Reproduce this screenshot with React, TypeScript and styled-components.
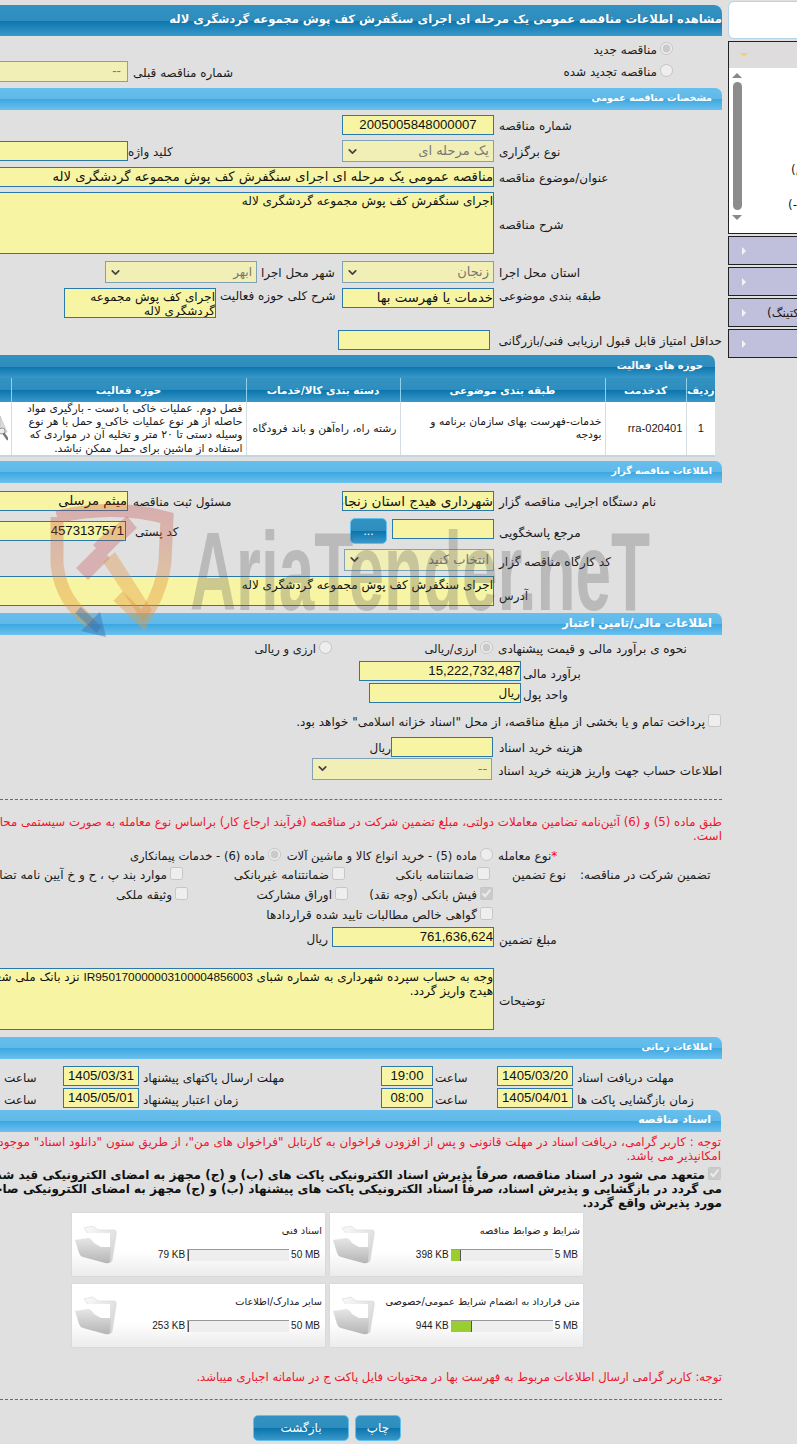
import * as React from "react";
import styled, { createGlobalStyle } from "styled-components";
import { ChevronDown } from "lucide-react";

const GlobalStyle = createGlobalStyle`
  html, body {
    margin: 0;
    padding: 0;
    background: #e0e0e0;
  }
  body {
    font-family: "DejaVu Sans", "Liberation Sans", sans-serif;
    font-size: 12px;
    color: #1a1a1a;
  }
`;

const Page = styled.div`
  display: flex;
  direction: rtl;
  position: relative;
  width: 797px;
  height: 1444px;
  overflow: hidden;
  background: #e0e0e0;
`;

/* ---------- right hand menu ---------- */

const SideBar = styled.aside`
  flex: 0 0 200px;
  margin-right: -131px;
  margin-left: 6px;
  padding-top: 1px;
  direction: ltr;
`;

const SideTop = styled.div`
  height: 38px;
  box-sizing: border-box;
  background: #fff;
  border: 1px solid #b4d4ea;
  border-radius: 6px 0 0 6px;
  margin-bottom: 2px;
`;

const Accordion = styled.div`
  height: 193px;
  box-sizing: border-box;
  border: 1px solid #222;
  background: #fff;
`;

const AccordionHead = styled.div`
  height: 26px;
  background: #dedcdc;
  display: flex;
  align-items: center;
  padding-left: 11px;
`;

const Caret = styled.span`
  width: 0;
  height: 0;
  border-left: 4px solid transparent;
  border-right: 4px solid transparent;
  border-top: 4px solid #eed36c;
`;

const AccordionBody = styled.div`
  display: flex;
  height: 165px;
`;

const ScrollTrack = styled.div`
  flex: 0 0 10px;
  margin: 5px 0 0 3px;
  display: flex;
  flex-direction: column;
  align-items: center;
`;

const ScrollArrow = styled.span<{ $down?: boolean }>`
  width: 0;
  height: 0;
  border-left: 5px solid transparent;
  border-right: 5px solid transparent;
  ${(p) => (p.$down ? "border-top: 5px solid #888;" : "border-bottom: 5px solid #888;")}
`;

const ScrollThumb = styled.span`
  width: 9px;
  height: 128px;
  margin: 4px 0 5px;
  border-radius: 5px;
  background: #8c8c8c;
`;

const MenuList = styled.div`
  flex: 1;
`;

const MenuText = styled.div<{ $indent: number; $top: number }>`
  padding-left: ${(p) => p.$indent}px;
  padding-top: ${(p) => p.$top}px;
  direction: rtl;
  text-align: left;
  white-space: nowrap;
  font-size: 12px;
  line-height: 16px;
`;

const MenuItem = styled.div`
  height: 29px;
  box-sizing: border-box;
  margin-top: 2px;
  border: 1px solid #222;
  background: #c0c0dc;
  display: flex;
  align-items: center;
  padding-left: 13px;
  gap: 21px;
  white-space: nowrap;
`;

const MenuArrow = styled.span`
  width: 0;
  height: 0;
  flex: none;
  border-top: 4px solid transparent;
  border-bottom: 4px solid transparent;
  border-left: 4px solid #f4f4f4;
`;

const MenuItemText = styled.span`
  direction: rtl;
`;

/* ---------- main column ---------- */

const Main = styled.main`
  flex: 0 0 722px;
  width: 722px;
  padding-top: 5px;
`;

const darkBar = "linear-gradient(#3192c1 0, #2f8dbd 50%, #0b76ae 52%, #3a98c9 100%)";

const TitleBar = styled.h1`
  margin: 0;
  height: 31px;
  box-sizing: border-box;
  line-height: 29px;
  font-size: 11.6px;
  font-weight: bold;
  color: #fff;
  white-space: nowrap;
  text-shadow: 0 0 1px #0b5c8a;
  border-top-right-radius: 8px;
  background: ${darkBar};
`;

const SectionBar = styled.h2<{ $right?: number; $after?: number; $size?: number }>`
  margin: 0 ${(p) => p.$right ?? 0}px ${(p) => p.$after ?? 0}px 0;
  height: 22px;
  box-sizing: border-box;
  padding-right: 10px;
  line-height: 20px;
  font-size: ${(p) => p.$size ?? 10}px;
  font-weight: bold;
  color: #fff;
  border-top-right-radius: 7px;
  background: linear-gradient(#66bfec 0, #5fb8e8 50%, #3da8e2 52%, #6cc0ec 100%);
`;

const TableBar = styled.h2`
  margin: 0 7px 0 0;
  height: 23px;
  box-sizing: border-box;
  padding-right: 12px;
  line-height: 22px;
  font-size: 10px;
  font-weight: bold;
  color: #fff;
  border-top-right-radius: 7px;
  background: ${darkBar};
`;

const Row = styled.div<{ $h: number; $mt?: number }>`
  display: flex;
  height: ${(p) => p.$h}px;
  margin-top: ${(p) => p.$mt ?? 0}px;
  align-items: flex-start;
  white-space: nowrap;
`;

const Label = styled.label<{ $w: number; $pl?: number; $pt?: number }>`
  flex: 0 0 ${(p) => p.$w}px;
  box-sizing: border-box;
  padding-left: ${(p) => p.$pl ?? 5}px;
  margin-top: ${(p) => p.$pt ?? 0}px;
  line-height: 23px;
  text-align: left;
`;

const Required = styled.span`
  color: #f00;
`;

const Field = styled.div<{
  $w: number;
  $h?: number;
  $latin?: boolean;
  $center?: boolean;
  $mt?: number;
  $mr?: number;
  $dim?: boolean;
  $pad?: number;
  $size?: number;
  $nowrap?: boolean;
}>`
  flex: 0 0 ${(p) => p.$w}px;
  width: ${(p) => p.$w}px;
  height: ${(p) => p.$h ?? 20}px;
  box-sizing: border-box;
  margin-top: ${(p) => p.$mt ?? 0}px;
  margin-right: ${(p) => p.$mr ?? 0}px;
  padding: 0 ${(p) => p.$pad ?? 0}px;
  overflow: hidden;
  background: ${(p) => (p.$dim ? "#f2efb6" : "#f7f5a4")};
  border: 1px solid ${(p) => (p.$dim ? "#7fa3b5" : "#2b78ab")};
  line-height: 18px;
  text-align: ${(p) => (p.$center ? "center" : "right")};
  white-space: nowrap;
  font-family: ${(p) => (p.$latin ? '"Liberation Sans", sans-serif' : "inherit")};
  font-size: ${(p) => p.$size ?? 13.2}px;
  color: ${(p) => (p.$dim ? "#777" : "#111")};
`;

const TextArea = styled(Field)`
  white-space: ${(p) => (p.$nowrap ? "nowrap" : "normal")};
  line-height: 14px;
  padding-top: 1px;
  font-size: 12px;
`;

const SelectBox = styled(Field)`
  display: flex;
  justify-content: space-between;
  align-items: center;
  height: 22px;
  padding: 0 4px 0 3px;
  background: #f2efb6;
  border-color: #7fa3b5;
  color: #777;
  svg {
    color: #444;
    flex: none;
  }
`;

const Iban = styled.span`
  font-family: "Liberation Sans", sans-serif;
  font-size: 11.8px;
`;

const DotsButton = styled.button`
  flex: 0 0 37px;
  height: 26px;
  margin: -1px 5px 0 0;
  padding: 0;
  color: #fff;
  font: 12px "Liberation Sans", sans-serif;
  border: 1px solid #63bfee;
  border-radius: 5px;
  background: ${darkBar};
`;

const Unit = styled.span<{ $mr?: number; $mt?: number }>`
  margin-right: ${(p) => p.$mr ?? 0}px;
  margin-top: ${(p) => p.$mt ?? 0}px;
  line-height: 23px;
`;

const Choice = styled.span<{ $w?: number; $mr?: number; $mt?: number; $pr?: number; $size?: number }>`
  display: inline-flex;
  flex: 0 0 ${(p) => (p.$w ? `${p.$w}px` : "auto")};
  min-width: 0;
  box-sizing: border-box;
  margin-right: ${(p) => p.$mr ?? 0}px;
  margin-top: ${(p) => p.$mt ?? 0}px;
  padding-right: ${(p) => p.$pr ?? 0}px;
  align-items: flex-start;
  line-height: 23px;
  font-size: ${(p) => p.$size ?? 12}px;
  input {
    margin: 3px 0 0 3px;
    flex: none;
  }
`;

const Divider = styled.hr<{ $top: number }>`
  margin: ${(p) => p.$top}px 0 0;
  border: 0;
  border-top: 1px dashed #2a7db0;
  height: 0;
`;

const RedNote = styled.div<{ $top?: number; $right?: number; $size?: number }>`
  margin-top: ${(p) => p.$top ?? 0}px;
  padding-right: ${(p) => p.$right ?? 0}px;
  color: #f0142c;
  font-size: ${(p) => p.$size ?? 12}px;
  line-height: 14px;
  white-space: nowrap;
`;

const Pledge = styled.div`
  margin-top: 4px;
  font-weight: bold;
  color: #111;
  line-height: 14px;
  white-space: nowrap;
  input {
    margin: 0 1px 0 3px;
    vertical-align: -1px;
  }
`;

/* ---------- activity table ---------- */

const TableWrap = styled.div`
  margin: 0 7px 4px 0;
`;

const ActivityTable = styled.table`
  width: 730px;
  table-layout: fixed;
  border-collapse: collapse;
  background: #fff;
  border-bottom: 2px solid #c6d5dc;
`;

const HeadCell = styled.th<{ $w: number }>`
  width: ${(p) => p.$w}px;
  box-sizing: border-box;
  height: 24px;
  padding: 0;
  font-size: 10.4px;
  color: #fff;
  border-left: 1px solid #8fd0ee;
  background: ${darkBar};
`;

const BodyCell = styled.td<{ $center?: boolean; $latin?: boolean }>`
  height: 53px;
  box-sizing: border-box;
  padding: 0 3px;
  font-size: 10.8px;
  line-height: 13.2px;
  vertical-align: middle;
  overflow: hidden;
  border-left: 1px solid #d4dde2;
  text-align: ${(p) => (p.$center ? "center" : "right")};
  font-family: ${(p) => (p.$latin ? '"Liberation Sans", sans-serif' : "inherit")};
  ${(p) => p.$latin && "font-size: 11.2px;"}
`;

const MagnifierArt = styled.svg`
  display: block;
  width: 11px;
  height: 28px;
`;

/* ---------- documents ---------- */

const DocGrid = styled.div`
  display: grid;
  grid-template-columns: 253px 253px;
  gap: 8px 5px;
  margin: 3px 139px 0 0;
`;

const DocCard = styled.div`
  height: 63px;
  display: flex;
  box-sizing: border-box;
  padding: 0 3px 0 3px;
  background: linear-gradient(#fff 0, #fff 60%, #ececec 100%);
  box-shadow: 0 0 2px #ccc;
`;

const DocBody = styled.div`
  flex: 1;
`;

const DocTitle = styled.div`
  margin-top: 11px;
  font-size: 9.8px;
  line-height: 14px;
  white-space: nowrap;
`;

const Meter = styled.div`
  direction: ltr;
  display: flex;
  justify-content: flex-end;
  align-items: center;
  gap: 2px;
  margin-top: 11px;
  padding-right: 2px;
  font-family: "Liberation Sans", sans-serif;
  font-size: 10px;
`;

const MeterTrack = styled.div`
  flex: 0 0 102px;
  height: 12px;
  box-sizing: border-box;
  background: #eee;
  border-top: 1px solid #999;
`;

const MeterFill = styled.div`
  height: 100%;
  background: #9acd32;
  border-right: 1px solid #555;
`;

const FolderArt = styled.svg`
  flex: none;
  width: 42px;
  height: 40px;
  margin-top: 12px;
`;

const ButtonRow = styled.div`
  display: flex;
  gap: 6px;
  margin: 15px 321px 0 0;
`;

const ActionButton = styled.button<{ $w: number }>`
  width: ${(p) => p.$w}px;
  height: 26px;
  padding: 0;
  font: 12px "DejaVu Sans", sans-serif;
  color: #fff;
  border: 1px solid #63bfee;
  border-radius: 5px;
  background: ${darkBar};
`;

const Watermark = styled.svg`
  position: absolute;
  left: 0;
  top: 500px;
  pointer-events: none;
`;

const Folder = () => (
  <FolderArt viewBox="0 0 42 40">
    <defs>
      <linearGradient id="folderBack" x1="0" y1="0" x2="1" y2="1">
        <stop offset="0" stopColor="#fbfbfb" />
        <stop offset="1" stopColor="#cfcfcf" />
      </linearGradient>
      <linearGradient id="folderFront" x1="0" y1="0" x2="0" y2="1">
        <stop offset="0" stopColor="#e6e6e6" />
        <stop offset="1" stopColor="#b5b5b5" />
      </linearGradient>
    </defs>
    <path d="M9 3 L18 1 L23 5 L40 5 Q42 6 41 10 L37 36 Q36 38 34 37 Z" fill="url(#folderBack)" stroke="#d6d6d6" strokeWidth="0.6" />
    <path d="M11 8 L35 8 L35 26 L20 26 Z" fill="#fff" />
    <path d="M0 15 L13 13 Q16 13 19 18 L26 22 L36 22 L35 37 Q34 39 30 38 L8 32 Q5 31 4 28 Z" fill="url(#folderFront)" />
  </FolderArt>
);

const Magnifier = () => (
  <MagnifierArt viewBox="0 0 11 28">
    <path d="M3 2 L10 18 L4 20 Z" fill="#dcdcdc" stroke="#b5b5b5" strokeWidth="0.6" />
    <circle cx="5" cy="17" r="3" fill="#eee" stroke="#999" />
    <path d="M7 20 L10.5 25" stroke="#777" strokeWidth="2.4" strokeLinecap="round" />
  </MagnifierArt>
);

type DocProps = { title: string; max: string; size: string; fill: number };

const Doc = ({ title, max, size, fill }: DocProps) => (
  <DocCard>
    <DocBody>
      <DocTitle>{title}</DocTitle>
      <Meter>
        <span>{size}</span>
        <MeterTrack>
          <MeterFill style={{ width: fill }} />
        </MeterTrack>
        <span>{max}</span>
      </Meter>
    </DocBody>
    <Folder />
  </DocCard>
);

const Chevron = () => <ChevronDown size={13} strokeWidth={3.2} />;

const docs: DocProps[] = [
  { title: "شرایط و ضوابط مناقصه", max: "5 MB", size: "398 KB", fill: 9 },
  { title: "اسناد فنی", max: "50 MB", size: "79 KB", fill: 1 },
  { title: "متن قرارداد به انضمام شرایط عمومی/خصوصی", max: "5 MB", size: "944 KB", fill: 20 },
  { title: "سایر مدارک/اطلاعات", max: "50 MB", size: "253 KB", fill: 1 },
];

export default function App() {
  return (
    <>
      <GlobalStyle />
      <Page>
        <SideBar>
          <SideTop />
          <Accordion>
            <AccordionHead>
              <Caret />
            </AccordionHead>
            <AccordionBody>
              <ScrollTrack>
                <ScrollArrow />
                <ScrollThumb />
                <ScrollArrow $down />
              </ScrollTrack>
              <MenuList>
                <MenuText $indent={49} $top={94}>
                  (مناقصات من)
                </MenuText>
                <MenuText $indent={46} $top={19}>
                  (گزارش-)
                </MenuText>
              </MenuList>
            </AccordionBody>
          </Accordion>
          <MenuItem>
            <MenuArrow />
          </MenuItem>
          <MenuItem>
            <MenuArrow />
          </MenuItem>
          <MenuItem>
            <MenuArrow />
            <MenuItemText>(تله مارکتینگ)</MenuItemText>
          </MenuItem>
          <MenuItem>
            <MenuArrow />
          </MenuItem>
        </SideBar>

        <Main>
          <TitleBar>مشاهده اطلاعات مناقصه عمومی یک مرحله ای اجرای سنگفرش کف پوش مجموعه گردشگری لاله</TitleBar>

          <Row $h={25}>
            <Choice $mr={49} $mt={3}>
              <input type="radio" disabled defaultChecked name="kind" />
              مناقصه جدید
            </Choice>
          </Row>
          <Row $h={27}>
            <Choice $w={488} $pr={49}>
              <input type="radio" disabled name="kind" />
              مناقصه تجدید شده
            </Choice>
            <Label $w={106} $pt={1}>
              شماره مناقصه قبلی
            </Label>
            <Field $w={150} $h={21} $dim $pad={6} $latin>
              --
            </Field>
          </Row>

          <SectionBar $after={5} $size={9.5}>
            مشخصات مناقصه عمومی
          </SectionBar>

          <Row $h={25}>
            <Label $w={228}>شماره مناقصه</Label>
            <Field $w={152} $latin $center>
              2005005848000007
            </Field>
          </Row>
          <Row $h={27}>
            <Label $w={228} $pt={1}>
              نوع برگزاری
            </Label>
            <SelectBox $w={152} $dim $size={13}>
              یک مرحله ای
              <Chevron />
            </SelectBox>
            <Label $w={214} $pl={0} $pt={1}>
              کلید واژه
            </Label>
            <Field $w={140} $mt={1} />
          </Row>
          <Row $h={25}>
            <Label $w={228}>عنوان/موضوع مناقصه</Label>
            <Field $w={520}>مناقصه عمومی یک مرحله ای اجرای سنگفرش کف پوش مجموعه گردشگری لاله</Field>
          </Row>
          <Row $h={69}>
            <Label $w={228} $pt={22}>
              شرح مناقصه
            </Label>
            <TextArea $w={520} $h={62}>
              اجرای سنگفرش کف پوش مجموعه گردشگری لاله
            </TextArea>
          </Row>
          <Row $h={27}>
            <Label $w={228} $pt={1}>
              استان محل اجرا
            </Label>
            <SelectBox $w={152} $dim $size={13}>
              زنجان
              <Chevron />
            </SelectBox>
            <Label $w={85} $pl={4} $pt={1}>
              شهر محل اجرا
            </Label>
            <SelectBox $w={152} $dim $size={12}>
              ابهر
              <Chevron />
            </SelectBox>
          </Row>
          <Row $h={42}>
            <Label $w={228} $pt={-3}>
              طبقه بندی موضوعی
            </Label>
            <Field $w={152}>خدمات یا فهرست بها</Field>
            <Label $w={126} $pl={4} $pt={-3}>
              شرح کلی حوزه فعالیت
            </Label>
            <TextArea $w={152} $h={30}>
              اجرای کف پوش مجموعه گردشگری لاله
            </TextArea>
          </Row>
          <Row $h={25}>
            <Label $w={232} $pl={9}>
              حداقل امتیاز قابل قبول ارزیابی فنی/بازرگانی
            </Label>
            <Field $w={152} />
          </Row>

          <TableBar>حوزه های فعالیت</TableBar>
          <TableWrap>
            <ActivityTable>
              <thead>
                <tr>
                  <HeadCell $w={29}>ردیف</HeadCell>
                  <HeadCell $w={81}>کدخدمت</HeadCell>
                  <HeadCell $w={205}>طبقه بندی موضوعی</HeadCell>
                  <HeadCell $w={154}>دسته بندی کالا/خدمات</HeadCell>
                  <HeadCell $w={235}>حوزه فعالیت</HeadCell>
                  <HeadCell $w={26} />
                </tr>
              </thead>
              <tbody>
                <tr>
                  <BodyCell $center $latin>
                    1
                  </BodyCell>
                  <BodyCell $latin>rra-020401</BodyCell>
                  <BodyCell>خدمات-فهرست بهای سازمان برنامه و بودجه</BodyCell>
                  <BodyCell>رشته راه، راه‌آهن و باند فرودگاه</BodyCell>
                  <BodyCell>
                    فصل دوم. عملیات خاکی با دست - بارگیری مواد حاصله از هر نوع عملیات خاکی و حمل با هر نوع وسیله دستی تا ۲۰ متر و تخلیه آن در مواردی که استفاده از ماشین برای حمل ممکن نباشد.
                  </BodyCell>
                  <BodyCell>
                    <Magnifier />
                  </BodyCell>
                </tr>
              </tbody>
            </ActivityTable>
          </TableWrap>

          <SectionBar $after={8} $size={9.5}>
            اطلاعات مناقصه گزار
          </SectionBar>
          <Row $h={28}>
            <Label $w={228}>نام دستگاه اجرایی مناقصه گزار</Label>
            <Field $w={152} $size={13.6}>
              شهرداری هیدج استان زنجان
            </Field>
            <Label $w={214} $pl={5}>
              مسئول ثبت مناقصه
            </Label>
            <Field $w={140}>میثم مرسلی</Field>
          </Row>
          <Row $h={30}>
            <Label $w={228} $pt={3}>
              مرجع پاسخگویی
            </Label>
            <Field $w={102} />
            <DotsButton>...</DotsButton>
            <Label $w={224} $pl={9} $pt={2}>
              کد پستی
            </Label>
            <Field $w={140} $mt={2} $latin $pad={1}>
              4573137571
            </Field>
          </Row>
          <Row $h={27}>
            <Label $w={228} $pt={2}>
              کد کارگاه مناقصه گزار
            </Label>
            <SelectBox $w={150} $dim $size={13}>
              انتخاب کنید
              <Chevron />
            </SelectBox>
          </Row>
          <Row $h={37}>
            <Label $w={228} $pt={9}>
              آدرس
            </Label>
            <TextArea $w={520} $h={30}>
              اجرای سنگفرش کف پوش مجموعه گردشگری لاله
            </TextArea>
          </Row>

          <SectionBar $after={2} $size={11.5}>
            اطلاعات مالی/تامین اعتبار
          </SectionBar>
          <Row $h={24}>
            <Label $w={229} $pt={1}>
              نحوه ی برآورد مالی و قیمت پیشنهادی
            </Label>
            <Choice $w={161} $mt={1} $size={11.5}>
              <input type="radio" disabled defaultChecked name="estimate" />
              ارزی/ریالی
            </Choice>
            <Choice $mt={1} $size={11.5}>
              <input type="radio" disabled name="estimate" />
              ارزی و ریالی
            </Choice>
          </Row>
          <Row $h={22}>
            <Label $w={201} $pl={2} $pt={2}>
              برآورد مالی
            </Label>
            <Field $w={162} $latin>
              15,222,732,487
            </Field>
          </Row>
          <Row $h={27}>
            <Label $w={201} $pl={2} $pt={1}>
              واحد پول
            </Label>
            <Field $w={152} $size={12}>
              ریال
            </Field>
          </Row>
          <Row $h={27}>
            <Choice $mr={1} $mt={1}>
              <input type="checkbox" disabled />
              پرداخت تمام و یا بخشی از مبلغ مناقصه، از محل "اسناد خزانه اسلامی" خواهد بود.
            </Choice>
          </Row>
          <Row $h={21}>
            <Label $w={229} $pl={6}>
              هزینه خرید اسناد
            </Label>
            <Field $w={102} />
            <Unit>ریال</Unit>
          </Row>
          <Row $h={22}>
            <Label $w={229} $pl={6} $pt={2}>
              اطلاعات حساب جهت واریز هزینه خرید اسناد
            </Label>
            <SelectBox $w={180} $dim $size={13}>
              --
              <Chevron />
            </SelectBox>
          </Row>

          <Divider $top={19} />
          <RedNote $top={15} $size={11.8}>
            طبق ماده (5) و (6) آئین‌نامه تضامین معاملات دولتی، مبلغ تضمین شرکت در مناقصه (فرآیند ارجاع کار) براساس نوع معامله به صورت سیستمی محاسبه شده
          </RedNote>
          <RedNote>است.</RedNote>

          <Row $h={19} $mt={2}>
            <Label $w={229}>
              <Required>*</Required>نوع معامله
            </Label>
            <Choice $w={212} $size={11.6}>
              <input type="radio" disabled name="deal" />
              ماده (5) - خرید انواع کالا و ماشین آلات
            </Choice>
            <Choice $size={11.6}>
              <input type="radio" disabled defaultChecked name="deal" />
              ماده (6) - خدمات پیمانکاری
            </Choice>
          </Row>
          <Row $h={20}>
            <Label $w={156} $pl={14}>
              تضمین شرکت در مناقصه:
            </Label>
            <Label $w={73} $pl={22}>
              نوع تضمین
            </Label>
            <Choice $w={145}>
              <input type="checkbox" disabled />
              ضمانتنامه بانکی
            </Choice>
            <Choice $w={162}>
              <input type="checkbox" disabled />
              ضمانتنامه غیربانکی
            </Choice>
            <Choice>
              <input type="checkbox" disabled />
              موارد بند پ ، ح و خ آیین نامه تضامین
            </Choice>
          </Row>
          <Row $h={20}>
            <Choice $w={145} $mr={229}>
              <input type="checkbox" disabled defaultChecked />
              فیش بانکی (وجه نقد)
            </Choice>
            <Choice $w={160}>
              <input type="checkbox" disabled />
              اوراق مشارکت
            </Choice>
            <Choice>
              <input type="checkbox" disabled />
              وثیقه ملکی
            </Choice>
          </Row>
          <Row $h={23}>
            <Choice $mr={229}>
              <input type="checkbox" disabled />
              گواهی خالص مطالبات تایید شده قراردادها
            </Choice>
          </Row>
          <Row $h={41}>
            <Label $w={228} $pt={2}>
              مبلغ تضمین
            </Label>
            <Field $w={162} $latin>
              761,636,624
            </Field>
            <Unit $mr={4} $mt={1}>
              ریال
            </Unit>
          </Row>
          <Row $h={69}>
            <Label $w={228} $pt={22}>
              توضیحات
            </Label>
            <TextArea $w={520} $h={62} $nowrap>
              وجه به حساب سپرده شهرداری به شماره شبای <Iban>IR950170000003100004856003</Iban> نزد بانک ملی شعبه
              <br />
              هیدج واریز گردد.
            </TextArea>
          </Row>

          <SectionBar $after={7} $size={9.5}>
            اطلاعات زمانی
          </SectionBar>
          <Row $h={22}>
            <Label $w={149} $pl={4} $pt={1}>
              مهلت دریافت اسناد
            </Label>
            <Field $w={76} $latin $center>
              1405/03/20
            </Field>
            <Label $w={64} $pl={2} $pt={1}>
              ساعت
            </Label>
            <Field $w={52} $latin $center>
              19:00
            </Field>
            <Label $w={242} $pl={4} $pt={1}>
              مهلت ارسال پاکتهای پیشنهاد
            </Label>
            <Field $w={76} $latin $center>
              1405/03/31
            </Field>
            <Label $w={61} $pl={2} $pt={1}>
              ساعت
            </Label>
          </Row>
          <Row $h={22}>
            <Label $w={149} $pl={4} $pt={1}>
              زمان بازگشایی پاکت ها
            </Label>
            <Field $w={76} $latin $center>
              1405/04/01
            </Field>
            <Label $w={64} $pl={2} $pt={1}>
              ساعت
            </Label>
            <Field $w={52} $latin $center>
              08:00
            </Field>
            <Label $w={242} $pl={4} $pt={1}>
              زمان اعتبار پیشنهاد
            </Label>
            <Field $w={76} $latin $center>
              1405/05/01
            </Field>
            <Label $w={61} $pl={2} $pt={1}>
              ساعت
            </Label>
          </Row>

          <SectionBar $right={1} $after={3} $size={11}>
            اسناد مناقصه
          </SectionBar>
          <RedNote $right={1}>
            توجه : کاربر گرامی، دریافت اسناد در مهلت قانونی و پس از افزودن فراخوان به کارتابل "فراخوان های من"، از طریق ستون "دانلود اسناد" موجود در این صفحه
          </RedNote>
          <RedNote $right={1}>امکانپذیر می باشد.</RedNote>
          <Pledge>
            <input type="checkbox" disabled defaultChecked />
            متعهد می شود در اسناد مناقصه، صرفاً پذیرش اسناد الکترونیکی پاکت های (ب) و (ج) مجهز به امضای الکترونیکی قید شده باشد
            <br />
            می گردد در بازگشایی و پذیرش اسناد، صرفاً اسناد الکترونیکی پاکت های پیشنهاد (ب) و (ج) مجهز به امضای الکترونیکی صاحبان امضا
            <br />
            مورد پذیرش واقع گردد.
          </Pledge>

          <DocGrid>
            {docs.map((d) => (
              <Doc key={d.title} {...d} />
            ))}
          </DocGrid>

          <RedNote $top={23} $size={11.65}>
            توجه: کاربر گرامی ارسال اطلاعات مربوط به فهرست بها در محتویات فایل پاکت ج در سامانه اجباری میباشد.
          </RedNote>
          <Divider $top={15} />
          <ButtonRow>
            <ActionButton $w={46}>چاپ</ActionButton>
            <ActionButton $w={96}>بازگشت</ActionButton>
          </ButtonRow>
        </Main>

        <Watermark width="700" height="150" viewBox="0 0 700 150">
          <defs>
            <linearGradient id="shieldTone" x1="0" y1="0" x2="0" y2="1">
              <stop offset="0" stopColor="#c23a3a" stopOpacity="0.3" />
              <stop offset="0.5" stopColor="#d8833a" stopOpacity="0.36" />
              <stop offset="1" stopColor="#e89a3a" stopOpacity="0.4" />
            </linearGradient>
          </defs>
          <path d="M57 17 C95 8 130 8 167 18 L165 62 C162 88 152 105 143 120 L118 96 M57 17 L57 64 C60 92 72 108 92 124" fill="none" stroke="url(#shieldTone)" strokeWidth="13" />
          <path d="M76 68 L98 46 L110 58 L88 80 Z M93 45 L110 28 L122 40 L105 57 Z M110 30 L127 16 L137 28 L122 42 Z" fill="#c23a3a" fillOpacity="0.28" />
          <path d="M103 62 L115 52 L152 110 L143 122 Z" fill="#e0913a" fillOpacity="0.36" />
          <path d="M78 110 L99 130" stroke="#3c6eaa" strokeOpacity="0.42" strokeWidth="8" />
          <path d="M106 137 L81 131 L100 112 Z" fill="#3c6eaa" fillOpacity="0.45" />
          <text x="190" y="110" fontFamily="Liberation Sans" fontWeight="bold" fontSize="112" textLength="460" lengthAdjust="spacingAndGlyphs" fill="#555" fillOpacity="0.27" direction="ltr">
            AriaTender.neT
          </text>
        </Watermark>
      </Page>
    </>
  );
}
